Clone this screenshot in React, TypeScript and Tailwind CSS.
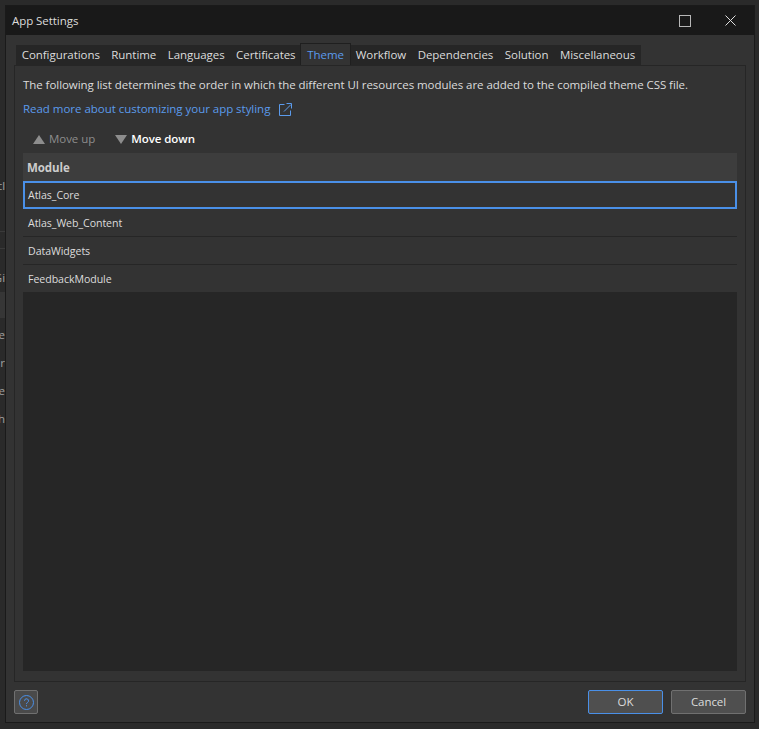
const tabs = [
  "Configurations",
  "Runtime",
  "Languages",
  "Certificates",
  "Theme",
  "Workflow",
  "Dependencies",
  "Solution",
  "Miscellaneous",
];

const modules = ["Atlas_Web_Content", "DataWidgets", "FeedbackModule"];

// bits of the window behind the dialog, only the ends of the labels stick out
function Backdrop() {
  return (
    <div className="flex w-[5px] shrink-0 flex-col text-[11.5px] leading-[16px] text-[#a0a0a0]">
      <div className="h-[173px] shrink-0" />
      <div className="flex h-[54px] shrink-0 justify-end overflow-hidden whitespace-nowrap border-b border-[#3a3a3a]">cl</div>
      <div className="h-[17px] shrink-0 border-b border-[#3a3a3a]" />
      <div className="flex h-[43px] shrink-0 items-end justify-end overflow-hidden whitespace-nowrap pb-[6px]">Gi</div>
      <div className="h-[26px] shrink-0 bg-[#363636]" />
      <div className="h-[3px] shrink-0" />
      <div className="flex h-[28px] shrink-0 items-center justify-end overflow-hidden">He</div>
      <div className="flex h-[28px] shrink-0 items-center justify-end overflow-hidden">ur</div>
      <div className="flex h-[28px] shrink-0 items-center justify-end overflow-hidden">De</div>
      <div className="flex h-[28px] shrink-0 items-center justify-end overflow-hidden">ch</div>
    </div>
  );
}

export default function App() {
  return (
    <div className="flex h-[729px] w-[759px] overflow-hidden bg-[#2a2a2a] pt-[5px] pr-[4px] pb-[6px] font-['Open_Sans',sans-serif] text-[11.5px] tracking-[-0.055px] text-[#dcdcdc]">
      <Backdrop />
      <div className="flex h-full flex-1 flex-col border border-[#1a1a1a] bg-[#333333]">
        <div className="flex h-[29px] shrink-0 items-center justify-between bg-[#191919] pl-[6px]">
          <span>App Settings</span>
          <div className="flex items-center">
            <div className="mr-[34px] h-[12px] w-[12px] border-[1.5px] border-[#b8b8b8]" />
            <svg width="11" height="11" viewBox="0 0 11 11" className="mr-[18px] stroke-[#e0e0e0]">
              <path d="M0.5 0.5l10 10M10.5 0.5l-10 10" />
            </svg>
          </div>
        </div>
        <div className="flex min-h-0 flex-1 flex-col px-[8px] pt-[10px]">
          <div className="ml-[2px] flex h-[20px] items-end self-start bg-[#262626]">
            {tabs.map((t) => (
              <div
                key={t}
                className={
                  t === "Theme"
                    ? "mx-[-1px] flex h-[22px] items-center border border-b-0 border-[#1f1f1f] bg-[#333333] px-[6px] text-[#5b9bec]"
                    : "flex h-[20px] items-center px-[5.75px]"
                }
              >
                {t}
              </div>
            ))}
          </div>
          <div className="flex min-h-0 flex-1 flex-col border border-[#262626] px-[8px] pt-[11px] pb-[10px]">
            <p className="leading-[16px]">
              The following list determines the order in which the different UI resources modules are added to the compiled theme CSS file.
            </p>
            <div className="mt-[8px] flex items-center gap-[9px] leading-[16px] tracking-[-0.03px] text-[#5b9bec]">
              <span>Read more about customizing your app styling</span>
              <svg width="13" height="13" viewBox="0 0 13 13" fill="none" className="stroke-[#5b9bec]">
                <path d="M5.5 1.5h-5v11h11v-5" />
                <path d="M5 8.5L12 1.5M7.5 0.5h5v5" />
              </svg>
            </div>
            <div className="mt-[14px] flex h-[16px] items-center gap-[20px] pl-[10px]">
              <div className="flex items-center gap-[4px] text-[#8d8d8d]">
                <span className="h-0 w-0 border-x-[6px] border-b-[9px] border-x-transparent border-b-[#8d8d8d]" />
                Move up
              </div>
              <div className="flex items-center gap-[4px] font-semibold text-white">
                <span className="h-0 w-0 border-x-[6px] border-t-[9px] border-x-transparent border-t-[#8d8d8d]" />
                Move down
              </div>
            </div>
            <div className="mt-[6px] flex min-h-0 flex-1 flex-col bg-[#262626]">
              <div className="flex h-[28px] shrink-0 items-center bg-[#3d3d3d] pl-[4px] pt-[2px] font-bold text-[#cccccc]">Module</div>
              <div className="flex h-[28px] shrink-0 items-center border-2 border-[#4a90e8] bg-[#333333] pl-[3px] pt-[2px] text-[10.6px]">Atlas_Core</div>
              {modules.map((m) => (
                <div key={m} className="flex h-[28px] shrink-0 items-center border-b border-[#262626] bg-[#333333] pl-[5px] pt-[2px] text-[10.6px]">
                  {m}
                </div>
              ))}
            </div>
          </div>
          <div className="flex h-[40px] shrink-0 items-center justify-between">
            <div className="flex h-[24px] w-[24px] items-center justify-center rounded-[2px] border border-[#707070] bg-[#4a4a4a]">
              <svg width="15" height="15" viewBox="0 0 15 15" fill="none" className="stroke-[#4a90e8]">
                <circle cx="7.5" cy="7.5" r="7" />
                <path d="M5.5 5.8a2 2 0 1 1 3 1.7c-.7.4-1 .8-1 1.6" />
                <path d="M7.5 10.2v1.2" />
              </svg>
            </div>
            <div className="flex gap-[8px]">
              <div className="flex h-[24px] w-[75px] items-center justify-center rounded-[2px] border border-[#4a90e8] bg-[#4f4f4f]">OK</div>
              <div className="flex h-[24px] w-[75px] items-center justify-center rounded-[2px] border border-[#707070] bg-[#4f4f4f]">Cancel</div>
            </div>
          </div>
        </div>
      </div>
    </div>
  );
}
